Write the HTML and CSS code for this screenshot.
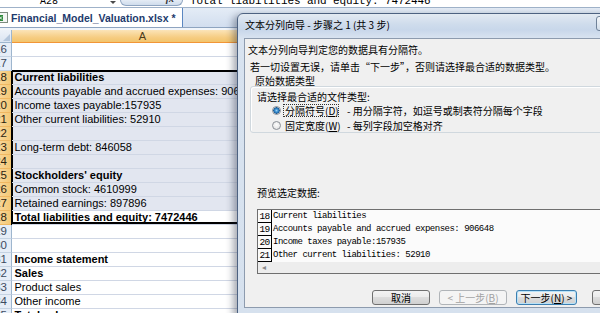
FILE: index.html
```html
<!DOCTYPE html>
<html lang="zh-CN">
<head>
<meta charset="utf-8">
<title>Financial_Model_Valuation.xlsx</title>
<link rel="stylesheet" href="styles.css">
</head>
<body>
<div class="excel">
  <div class="fbar">
    <span class="nb">A28</span>
    <span class="dd"></span>
    <span class="fbtn"><span class="fx">fx</span></span>
    <span class="ft">Total liabilities and equity: 7472446</span>
  </div>
  <div class="tabs">
    <div class="tab">
      <svg class="xicon" width="10" height="11" viewBox="0 0 10 11"><rect x="0.5" y="0.5" width="9" height="10" fill="#f3f5f3" stroke="#7d8c7f"/><rect x="0" y="3" width="5" height="6" fill="#2f8a3c"/><path d="M1 4.5l3 3M4 4.5l-3 3" stroke="#fff" stroke-width="0.9"/></svg>
      <span class="tabname">Financial_Model_Valuation.xlsx *</span>
    </div>
  </div>
  <div class="tabgap"></div>
  <div class="colhdr">
    <div class="corner"><span class="tri"></span></div>
    <div class="colA">A</div>
    <div class="colB"></div>
  </div>
  <div class="r"><div class="rh">16</div><div class="c"></div></div>
  <div class="r"><div class="rh">17</div><div class="c"></div></div>
  <div class="r"><div class="rh s">18</div><div class="c t b sel top">Current liabilities</div></div>
  <div class="r"><div class="rh s">19</div><div class="c t sel">Accounts payable and accrued expenses: 906648</div></div>
  <div class="r"><div class="rh s">20</div><div class="c t sel">Income taxes payable:157935</div></div>
  <div class="r"><div class="rh s">21</div><div class="c t sel">Other current liabilities: 52910</div></div>
  <div class="r"><div class="rh s">22</div><div class="c t sel"></div></div>
  <div class="r"><div class="rh s">23</div><div class="c t sel">Long-term debt: 846058</div></div>
  <div class="r"><div class="rh s">24</div><div class="c t sel"></div></div>
  <div class="r"><div class="rh s">25</div><div class="c t b sel">Stockholders' equity</div></div>
  <div class="r"><div class="rh s">26</div><div class="c t sel">Common stock: 4610999</div></div>
  <div class="r"><div class="rh s">27</div><div class="c t sel">Retained earnings: 897896</div></div>
  <div class="r"><div class="rh s">28</div><div class="c b sel bot">Total liabilities and equity: 7472446</div></div>
  <div class="r"><div class="rh">29</div><div class="c"></div></div>
  <div class="r"><div class="rh">30</div><div class="c"></div></div>
  <div class="r"><div class="rh">31</div><div class="c b">Income statement</div></div>
  <div class="r"><div class="rh">32</div><div class="c b">Sales</div></div>
  <div class="r"><div class="rh">33</div><div class="c">Product sales</div></div>
  <div class="r"><div class="rh">34</div><div class="c">Other income</div></div>
  <div class="r"><div class="rh">35</div><div class="c b">Total sales</div></div>
</div>

<div class="dlg">
  <div class="dtitle">
    <span class="tt">文本分列向导 - 步骤之 1 (共 3 步)</span>
    <span class="tctl"></span>
  </div>
  <div class="client">
    <p class="l1">文本分列向导判定您的数据具有分隔符。</p>
    <p class="l2">若一切设置无误，请单击“下一步”，否则请选择最合适的数据类型。</p>
    <div class="glabel">原始数据类型</div>
    <div class="group">
      <div class="gline">请选择最合适的文件类型:</div>
      <div class="opt"><span class="radio on"></span><span class="olabel focus">分隔符号(<u>D</u>)</span><span class="odesc">- 用分隔字符，如逗号或制表符分隔每个字段</span></div>
      <div class="opt o2"><span class="radio"></span><span class="olabel">固定宽度(<u>W</u>)</span><span class="odesc">- 每列字段加空格对齐</span></div>
    </div>
    <div class="plabel">预览选定数据:</div>
    <div class="preview">
      <div class="prow"><span class="pn">18</span><span class="pt">Current liabilities</span></div>
      <div class="prow"><span class="pn">19</span><span class="pt">Accounts payable and accrued expenses: 906648</span></div>
      <div class="prow"><span class="pn">20</span><span class="pt">Income taxes payable:157935</span></div>
      <div class="prow"><span class="pn">21</span><span class="pt">Other current liabilities: 52910</span></div>
      <div class="hscroll"><span class="arr">◂</span></div>
    </div>
    <div class="btns">
      <span class="btn w1">取消</span>
      <span class="btn dis w2">&lt; 上一步(<u>B</u>)</span>
      <span class="btn def w3">下一步(<u>N</u>) &gt;</span>
      <span class="btn w4">完成(<u>F</u>)</span>
    </div>
  </div>
</div>
</body>
</html>
```

FILE: styles.css
```css
* { box-sizing: border-box; }
body {
  margin: 0;
  width: 600px;
  height: 313px;
  overflow: hidden;
  position: relative;
  background: #fff;
  font-family: "Liberation Sans", Arial, sans-serif;
}

/* formula bar (cut at top) */
.fbar {
  height: 8px;
  border-bottom: 1px solid #9fb2c9;
  display: flex;
  overflow: hidden;
  background: #fff;
}
.nb {
  margin-left: 40px;
  width: 68px;
  margin-top: -5px;
  font: 10px/13px "Liberation Mono", monospace;
  color: #000;
}
.dd {
  width: 12px;
  position: relative;
}
.dd::after {
  content: "";
  position: absolute;
  left: 2px;
  top: 1px;
  border-left: 3px solid transparent;
  border-right: 3px solid transparent;
  border-top: 3px solid #4a4a4a;
}
.fbtn {
  width: 63px;
  height: 7px;
  margin-top: -1px;
  border: 1px solid #8fa5c1;
  border-top: none;
  border-radius: 0 0 6px 6px;
  background: linear-gradient(#e9eff7, #cfdcec);
  display: flex;
  justify-content: flex-end;
}
.fx {
  font: italic bold 10px/12px "Liberation Serif", serif;
  margin-top: -6px;
  margin-right: 8px;
  color: #333;
}
.ft {
  margin-left: 7px;
  margin-top: -5px;
  font: 11px/13px "Liberation Mono", monospace;
  letter-spacing: -0.1px;
  white-space: nowrap;
  color: #000;
}

/* workbook tab */
.tabs {
  height: 20px;
  background: linear-gradient(#e4ecf6, #d2deef);
  border-bottom: 1px solid #8ea4c0;
  display: flex;
  align-items: flex-end;
}
.tab {
  height: 19px;
  width: 183px;
  background: #fff;
  border-right: 1px solid #5b87c1;
  display: flex;
  align-items: center;
  overflow: hidden;
}
.xicon {
  margin-left: -2px;
  flex: 0 0 auto;
}
.tabname {
  margin-left: 3px;
  font: bold 10.5px/14px "Liberation Sans", Arial, sans-serif;
  color: #1d3a6c;
  white-space: nowrap;
}
.tabgap {
  height: 2px;
  background: #f1f5fa;
}

/* column header */
.colhdr {
  display: flex;
  height: 13px;
}
.corner {
  width: 12px;
  background: linear-gradient(#edf2f9, #dbe5f2);
  border-right: 1px solid #9eb6ce;
  border-bottom: 1px solid #9eb6ce;
  position: relative;
}
.tri {
  position: absolute;
  right: 1px;
  bottom: 1px;
  border-left: 7px solid transparent;
  border-bottom: 7px solid #b4c6dc;
}
.colA {
  width: 262px;
  background: linear-gradient(#fbe4b8, #f6cd83 60%, #f2c46c);
  border-right: 1px solid #f29536;
  border-bottom: 1px solid #f29536;
  text-align: center;
  font: 11px/12px "Liberation Sans", Arial, sans-serif;
  color: #4a3a1a;
}
.colB {
  flex: 1;
  background: linear-gradient(#edf2f9, #dbe5f2);
  border-bottom: 1px solid #9eb6ce;
}

/* rows */
.r {
  display: flex;
  height: 14px;
}
.rh {
  width: 12px;
  flex: 0 0 12px;
  background: #e6edf7;
  border-right: 1px solid #9eb6ce;
  border-bottom: 1px solid #c5d3e3;
  display: flex;
  justify-content: flex-end;
  overflow: hidden;
  padding-right: 4px;
  font: 11.5px/13px "Liberation Sans", Arial, sans-serif;
  color: #3c4a5e;
}
.rh.s {
  background: linear-gradient(90deg, #f8d596, #f4c874);
  border-right-color: #f29536;
  border-bottom-color: #f0b862;
  color: #2a2210;
}
.c {
  flex: 1;
  border-bottom: 1px solid #d0d7e5;
  font: 11px/13px "Liberation Sans", Arial, sans-serif;
  padding-left: 2.5px;
  white-space: nowrap;
  overflow: hidden;
  color: #000;
}
.c.t { background: #e2e6f0; }
.b { font-weight: bold; }
.sel { box-shadow: -1px 0 0 #000, inset 1px 0 0 #000; }
.sel.top { box-shadow: -1px 0 0 #000, inset 1px 0 0 #000, 0 -1px 0 #000, inset 0 1px 0 #000; }
.sel.bot { box-shadow: -1px 0 0 #000, inset 1px 0 0 #000, inset 0 -2px 0 #000; }

/* dialog window */
.dlg {
  position: absolute;
  left: 237px;
  top: 13px;
  width: 420px;
  border: 1px solid #4d6281;
  border-radius: 6px 6px 0 0;
  background: linear-gradient(180deg, #e3eaf2 0px, #cfdcec 10px, #c8d7ea 16px, #d8e3f0 24px, #d6e1ee 100%);
  padding: 0 6px 6px 6px;
  box-shadow: -3px 3px 7px 1px rgba(30, 40, 60, 0.38);
  font-family: "Noto Sans CJK SC", "Liberation Sans", sans-serif;
  color: #000;
}
.dtitle {
  height: 24px;
  display: flex;
  align-items: flex-start;
}
.tt {
  padding-left: 1px;
  font-size: 10px;
  line-height: 22px;
  white-space: nowrap;
}
.tctl {
  margin-left: auto;
  margin-top: 2px;
  width: 54px;
  height: 15px;
  border: 1px solid #6f8299;
  border-radius: 3px;
  background: linear-gradient(#f4f7fa, #d3deea);
}
.client {
  height: 270px;
  background: #f0f0f0;
  border: 1px solid #8d9bae;
  overflow: hidden;
  font-size: 10px;
}
.l1 {
  margin: 0;
  padding: 3px 0 0 3px;
  line-height: 16px;
  white-space: nowrap;
}
.l2 {
  margin: 0;
  padding-left: 5px;
  line-height: 17px;
  white-space: nowrap;
}
.glabel {
  padding-left: 10px;
  line-height: 11px;
}
.group {
  margin-left: 5px;
  height: 47px;
  border: 1px solid #d0d8de;
  border-radius: 3px;
  box-shadow: inset 1px 1px 0 #fff;
  padding: 4px 0 0 6px;
}
.gline { line-height: 12px; }
.opt {
  display: flex;
  align-items: center;
  height: 14px;
  white-space: nowrap;
}
.opt.o2 { margin-top: 1px; }
.radio {
  margin-left: 15px;
  width: 9px;
  height: 9px;
  border-radius: 50%;
  border: 1px solid #8a8f96;
  background: radial-gradient(circle at 50% 40%, #fdfdfd, #dcdcdc);
  flex: 0 0 auto;
}
.radio.on {
  background: radial-gradient(circle, #9ad2f6 0, #3a8fd0 1.6px, #1d5e9a 3px, #e8eef4 3.4px, #f4f4f4 100%);
}
.olabel {
  margin-left: 2px;
  width: 56px;
  height: 13px;
  line-height: 11px;
  padding: 0 1px;
  border: 1px dotted transparent;
}
.olabel.focus { border-color: #333; }
.odesc { margin-left: 8px; }
.plabel {
  margin-top: 54px;
  padding-left: 12px;
  line-height: 12px;
}
.preview {
  margin: 10px 0 0 12px;
  width: 500px;
  height: 65px;
  border: 1px solid #6f6f6f;
  background: #fbfbfb;
}
.prow {
  display: flex;
  height: 13px;
}
.pn {
  width: 14px;
  flex: 0 0 14px;
  border-right: 1px solid #000;
  border-bottom: 1px solid #000;
  text-align: center;
  font: 9.5px/13px "Liberation Mono", monospace;
  letter-spacing: -0.6px;
}
.pt {
  padding-left: 1px;
  font: 9px/12px "Liberation Mono", monospace;
  letter-spacing: -0.5px;
  white-space: pre;
}
.hscroll {
  height: 11px;
  background-color: #ededed;
  background-image: radial-gradient(#d8d8d8 0.6px, transparent 0.7px);
  background-size: 2px 2px;
  padding-left: 4px;
  font: 8px/11px "DejaVu Sans", sans-serif;
  color: #8a8a8a;
}
.btns {
  display: flex;
  margin: 16px 0 0 127px;
}
.btn {
  height: 15px;
  border: 1px solid #707070;
  border-radius: 3px;
  background: linear-gradient(#f3f3f3 0, #ebebeb 50%, #dddddd 50%, #d0d0d0 100%);
  display: flex;
  align-items: center;
  justify-content: center;
  line-height: 13px;
  white-space: nowrap;
  flex: 0 0 auto;
}
.btn.dis {
  color: #a2a2a2;
  border-color: #b0b4b8;
  background: #f4f4f4;
}
.btn.def {
  border-color: #3c7fb1;
  box-shadow: inset 0 0 0 1px #b8e2f8;
}
.w1 { width: 58px; }
.w2 { width: 68px; margin-left: 9px; }
.w3 { width: 61px; margin-left: 9px; }
.w4 { width: 60px; margin-left: 15px; }
```
